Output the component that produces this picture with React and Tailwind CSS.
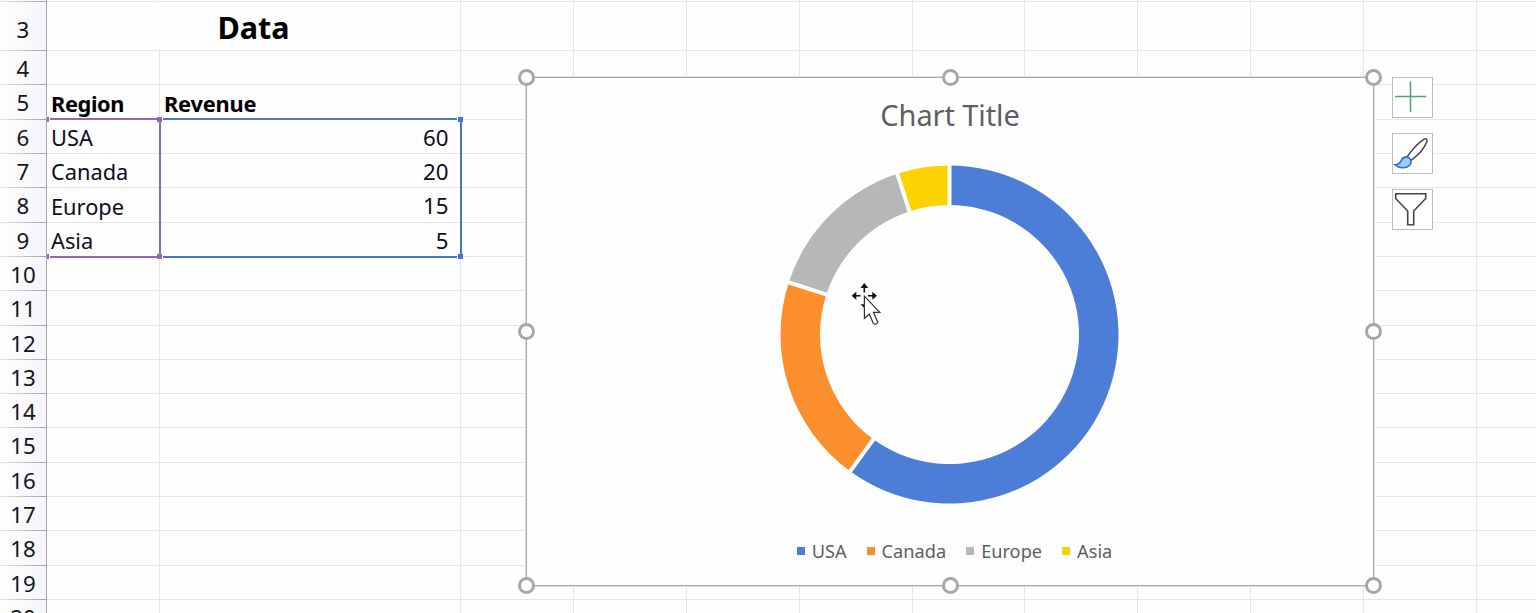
import clsx from 'clsx'

const data = [
  { region: 'USA', revenue: 60, color: '#4d7ed7' },
  { region: 'Canada', revenue: 20, color: '#fb8f2e' },
  { region: 'Europe', revenue: 15, color: '#b7b7b7' },
  { region: 'Asia', revenue: 5, color: '#fbd303' },
]

const rowNumbers = [4, 5, 6, 7, 8, 9, 10, 11, 12, 13, 14, 15, 16, 17, 18, 19, 20]
const extraColumns = [0, 1, 2, 3, 4, 5, 6, 7, 8, 9]

function RowHeader({ className, children }) {
  return (
    <div className="w-[47px] shrink-0 flex flex-col border-r border-[#a9a9b0] bg-gradient-to-r from-[#fdfdfd] to-[#f6f6fa] text-[22.3px] text-[#15151f]">
      <div className={clsx('flex-1 min-h-0 flex items-center justify-center', className)}>{children}</div>
      <div className="h-px shrink-0 bg-gradient-to-r from-[#e6e6e6] to-[#a4a4a8]" />
    </div>
  )
}

function Cell({ className, children }) {
  return (
    <div className={clsx('shrink-0 border-r border-b border-[#e6e6e6] whitespace-nowrap', className)}>
      {children}
    </div>
  )
}

function ExtraCells() {
  return extraColumns.map(c => <Cell key={c} className="w-[112.9px]" />)
}

function SheetRow({ number }) {
  const item = data[number - 6]
  const isHeader = number === 5

  return (
    <div className="flex h-[34.32px] shrink-0">
      <RowHeader className="pt-[3px]">{number}</RowHeader>
      <Cell className={clsx('w-[113px] flex items-center pl-[4px] pt-[3.4px]', isHeader && 'font-bold tracking-[-0.4px] text-black')}>
        {isHeader ? 'Region' : item?.region}
      </Cell>
      <Cell className={clsx('w-[301px] flex items-center pt-[3.4px]', isHeader ? 'pl-[4px] font-bold tracking-[-0.2px] text-black' : 'justify-end pr-[11.5px] text-[22.3px]')}>
        {isHeader ? 'Revenue' : item?.revenue}
      </Cell>
      <ExtraCells />
    </div>
  )
}

function Sheet() {
  return (
    <div className="flex flex-col text-[21.8px] leading-none text-[#0d0d1c]">
      <div className="flex h-[2px] shrink-0">
        <RowHeader />
        <Cell className="w-[113px]" />
        <Cell className="w-[301px]" />
        <ExtraCells />
      </div>
      <div className="flex h-[49px] shrink-0">
        <RowHeader className="pt-[9px]">3</RowHeader>
        <Cell className="w-[414px] flex items-center justify-center pt-[3px] text-[30.5px] font-bold text-black">Data</Cell>
        <ExtraCells />
      </div>
      {rowNumbers.map(n => <SheetRow key={n} number={n} />)}
    </div>
  )
}

function RangeEdge({ bottom }) {
  return (
    <div className={clsx('flex h-[5px]', bottom ? 'items-center' : 'items-start')}>
      <div className="w-[2px] h-[5px] bg-[#8d6bb9]" />
      <div className={clsx('ml-px w-[107px] h-[2px] bg-[#9168bf]', !bottom && 'mt-px')} />
      <div className="size-[5px] bg-[#9168bf]" />
      <div className={clsx('mx-px flex-1 h-[2px]', bottom ? 'bg-[#3f76d0]' : 'mt-px bg-[#4a7dc4]')} />
      <div className="size-[5px] bg-[#3f76d0]" />
    </div>
  )
}

// Coloured range borders around the chart's source cells
function RangeMarkers() {
  return (
    <div className="absolute left-[47px] top-[117px] w-[416px] h-[142px] flex flex-col justify-between">
      <RangeEdge />
      <div className="flex justify-between h-[132px] pl-[112px] pr-px">
        <div className="w-[2px] bg-[#7e6bb3]" />
        <div className="w-[2px] bg-[#4776be]" />
      </div>
      <RangeEdge bottom />
    </div>
  )
}

function Doughnut() {
  const total = data.reduce((sum, d) => sum + d.revenue, 0)
  const outer = 169
  const inner = 129.5
  const point = (r, share) => {
    const a = share * Math.PI * 2
    return `${(r * Math.sin(a)).toFixed(2)} ${(-r * Math.cos(a)).toFixed(2)}`
  }

  let sum = 0
  const slices = data.map(d => {
    const from = sum / total
    sum += d.revenue
    const to = sum / total
    const large = to - from > 0.5 ? 1 : 0
    const path = `M${point(outer, from)} A${outer} ${outer} 0 ${large} 1 ${point(outer, to)} L${point(inner, to)} A${inner} ${inner} 0 ${large} 0 ${point(inner, from)}Z`
    return { ...d, path, from }
  })

  return (
    <svg width="340" height="340" viewBox="-169.5 -169.6 340 340">
      {slices.map(s => <path key={s.region} d={s.path} fill={s.color} />)}
      {slices.map(s => (
        <path key={s.region} d={`M${point(inner - 2, s.from)} L${point(outer + 2, s.from)}`} stroke="#fefefe" strokeWidth="4" />
      ))}
    </svg>
  )
}

function Handle() {
  return <div className="size-[17px] rounded-full bg-white border-3 border-[#a6a6a6]" />
}

function Handles() {
  return (
    <div className="absolute -left-[9px] -top-[9px] w-[864px] h-[525px] flex flex-col justify-between">
      <div className="flex justify-between"><Handle /><Handle /><Handle /></div>
      <div className="flex justify-between"><Handle /><Handle /></div>
      <div className="flex justify-between"><Handle /><Handle /><Handle /></div>
    </div>
  )
}

function Chart() {
  return (
    <div className="absolute left-[526px] top-[77px] w-[848px] h-[509px] bg-[#fefefe] border border-[#a9a9a9] shadow-[0_0_0_1px_#dedede] flex flex-col items-center text-[#5f5f5f]">
      <h1 className="mt-[21px] h-[32px] text-[29px] leading-[32px] tracking-[-0.1px]">Chart Title</h1>
      <div className="mt-[34px]"><Doughnut /></div>
      <div className="mt-[35px] flex items-center text-[18.2px] leading-[22px] pl-[9px] gap-[20px]">
        {data.map(d => (
          <div key={d.region} className="flex items-center gap-[7px]">
            <span className="size-[8px]" style={{ backgroundColor: d.color }} />
            <span>{d.region}</span>
          </div>
        ))}
      </div>
      <Handles />
    </div>
  )
}

function ToolButton({ children }) {
  return (
    <button className="size-[41px] bg-white border border-[#bdbdbd]">
      <svg width="39" height="39" viewBox="0.3 0 39 39" fill="none">{children}</svg>
    </button>
  )
}

function ChartTools() {
  return (
    <div className="absolute left-[1392px] top-[77px] flex flex-col gap-[15px]">
      <ToolButton>
        <path d="M2.5 18.5H33.5M17.8 3.5V34" stroke="#4ba767" strokeWidth="1.5" />
      </ToolButton>
      <ToolButton>
        <path d="M14.3 22.9C19 16.4 26 8.4 31.5 5.2C33.5 4.2 34.8 5 34.2 7.4C32 13.4 25 21.4 18.5 26.4" stroke="#444" strokeWidth="1.5" fill="#fff" />
        <path d="M2.3 30.9C6 30.7 7.5 28.9 8.6 26.4C10 22.9 14 22 16.5 23.9C19 26 19 29.4 16.5 31.6C13 34.9 6.5 34.4 2.3 30.9Z" stroke="#2e72c4" strokeWidth="1.6" fill="#9bcdfa" />
      </ToolButton>
      <ToolButton>
        <path d="M3 3.8H33V8.5L21 21V34.8H15V21L3 8.5Z" stroke="#444" strokeWidth="1.6" fill="#fff" />
      </ToolButton>
    </div>
  )
}

function MoveCursor() {
  return (
    <svg className="absolute left-[850px] top-[282px]" width="34" height="46" viewBox="0 0 34 46">
      <g fill="#111">
        <path d="M14.3 1L18.2 6H10.4Z" />
        <path d="M1.6 13.8L6.3 9.8V17.8Z" />
        <path d="M27 13.8L22.3 9.8V17.8Z" />
        <path d="M10.5 22.3H14.3V26Z" />
      </g>
      <path d="M14.3 5V10.5M6 13.8H10.5M18 13.8H23" stroke="#111" strokeWidth="1.6" />
      <path d="M14.4 14.2V36.5L19.3 32L23.3 41.3Q25.5 43.5 27.8 40.2L23.4 30.3H29.8Z" fill="#fff" stroke="#333" strokeWidth="1.2" />
    </svg>
  )
}

export default function App() {
  return (
    <main className="relative w-[1536px] h-[613px] overflow-hidden bg-[#fefefe] font-['Noto_Sans',sans-serif]">
      <Sheet />
      <RangeMarkers />
      <Chart />
      <ChartTools />
      <MoveCursor />
    </main>
  )
}
